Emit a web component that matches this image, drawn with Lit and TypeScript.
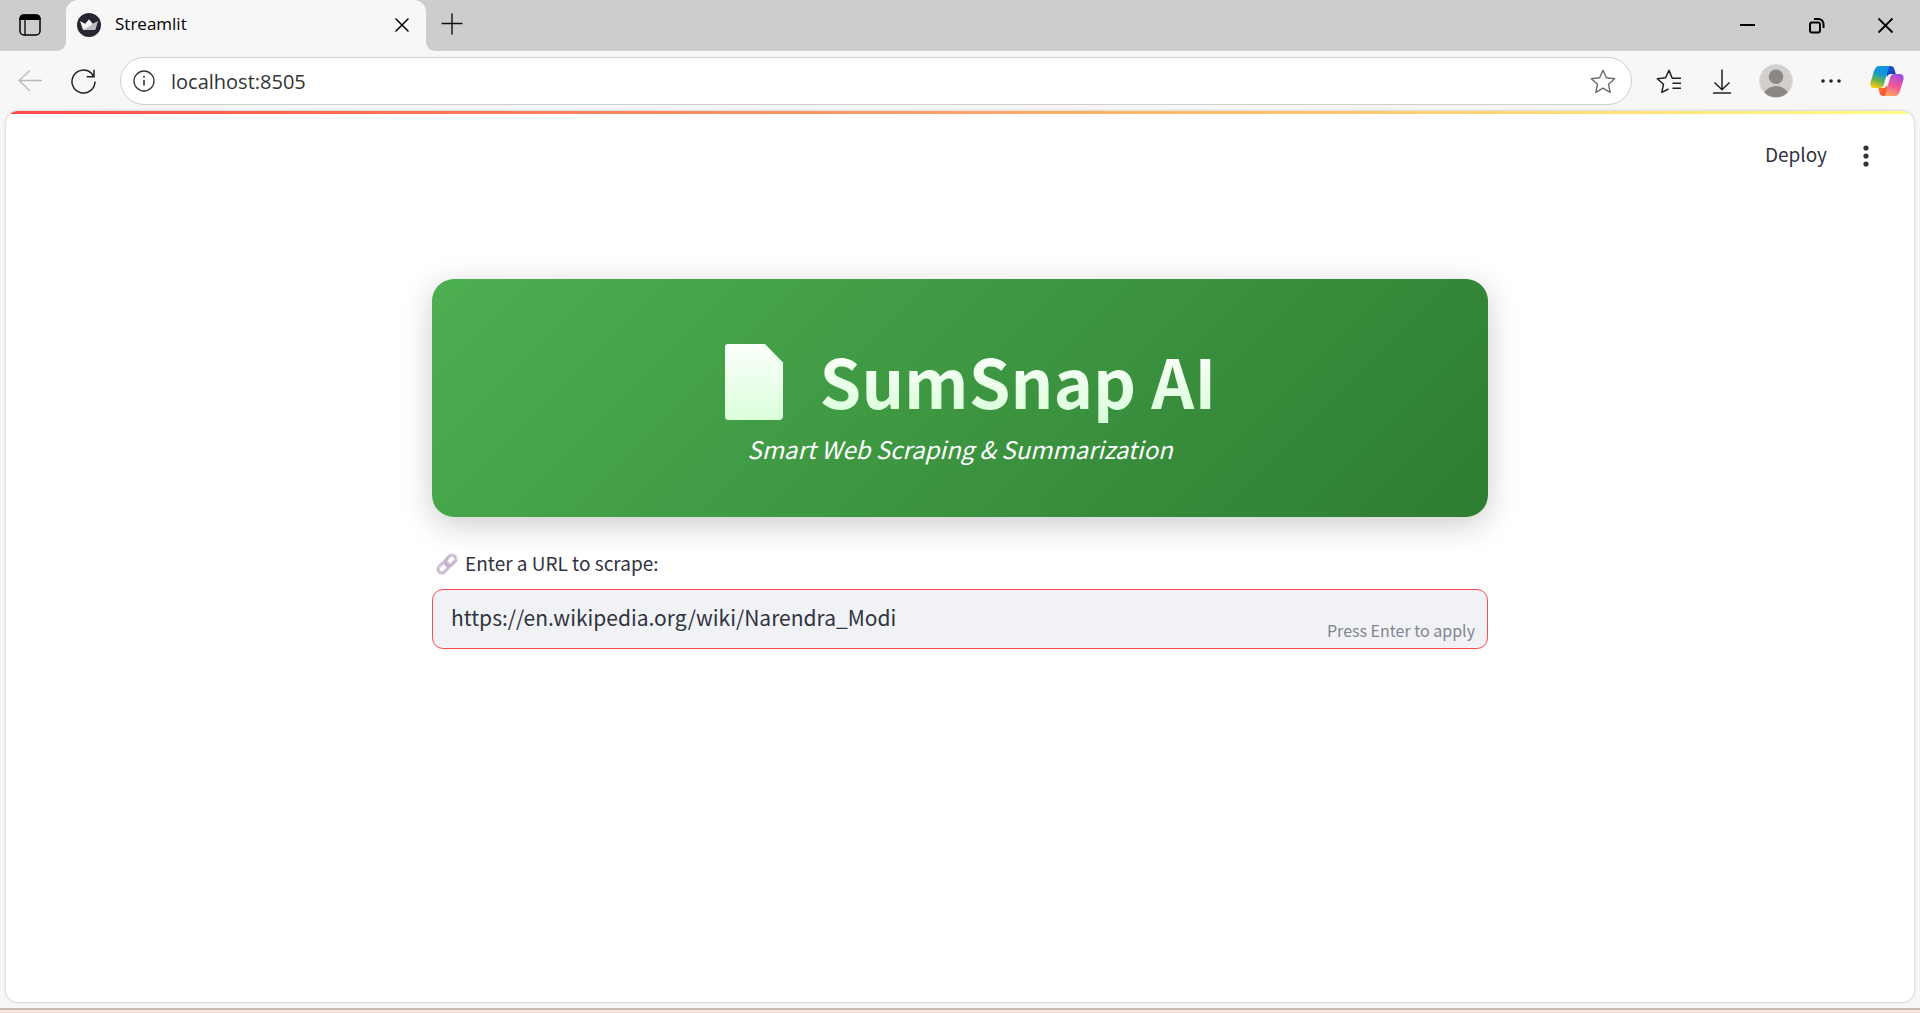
import { LitElement, html, css } from "lit";
import { customElement, state } from "lit/decorators.js";

const reset = css`
  *, *::before, *::after { box-sizing: border-box; }
  button { background: none; border: 0; padding: 0; margin: 0; font: inherit; color: inherit; cursor: pointer; }
  svg { display: block; flex: none; }
`;

@customElement("tab-strip")
export class TabStrip extends LitElement {
  static styles = [reset, css`
    :host { display: block; }
    .strip { display: flex; height: 51px; background: linear-gradient(#cdcdcd 50%, #f7f7f7 50%); color: #000; }
    .lead { width: 66px; padding: 0 0 2px 19px; display: flex; align-items: center; background: #cdcdcd; border-bottom-right-radius: 9px; }
    .tab { width: 360px; display: flex; align-items: center; background: #f7f7f7; border-radius: 12px 12px 0 0; padding: 0 17px 2px 11px; gap: 14px; font-size: 17px; }
    .title { flex: 1; padding-bottom: 2px; }
    .rest { flex: 1; display: flex; align-items: center; background: #cdcdcd; border-bottom-left-radius: 9px; padding: 0 26px 0 15px; }
    .add { padding-bottom: 4px; }
    .window { margin-left: auto; display: flex; gap: 52px; }
  `];
  render() {
    return html`
      <div class="strip">
        <div class="lead">
          <button aria-label="Tab actions">
            <svg width="22" height="22" viewBox="0 0 22 22"><rect x="1" y="1" width="20" height="20" rx="4" fill="none" stroke="#000" stroke-width="1.5"/><path d="M0.5 6V4.5a4 4 0 0 1 4-4h13a4 4 0 0 1 4 4V6z"/><path d="M6 6v15" stroke="#000" stroke-width="1.3"/></svg>
          </button>
        </div>
        <div class="tab">
          <svg width="24" height="24" viewBox="0 0 24 24"><circle cx="12" cy="12" r="12" fill="#262730"/><path d="M3.200 8.200 8.200 11 12 6.500l3.800 4.500 5-2.800-2.300 7.600q-.4 1.200-1.500 1.200H7q-1.100 0-1.500-1.200z" fill="#dadadc"/><path d="M12 6.500l3.800 4.500L7 16.500 3.200 8.200l5 2.800z" fill="#f4f4f4"/><path d="m20.800 8.200-5 2.800L7 17h10q1.100 0 1.500-1.200z" fill="#bdbdc0"/></svg>
          <span class="title">Streamlit</span>
          <button aria-label="Close tab">
            <svg width="14" height="14" viewBox="0 0 14 14"><path d="M1 1l12 12M13 1 1 13" stroke="#000" stroke-width="1.5" stroke-linecap="round"/></svg>
          </button>
        </div>
        <div class="rest">
          <button class="add" aria-label="New tab">
            <svg width="22" height="22" viewBox="0 0 22 22"><path d="M11 .5v21M.5 10.500h21" stroke="#111" stroke-width="1.400"/></svg>
          </button>
          <div class="window">
            <button aria-label="Minimize"><svg width="17" height="17" viewBox="0 0 17 17"><path d="M1 8h15" stroke="#000" stroke-width="2"/></svg></button>
            <button aria-label="Restore"><svg width="17" height="17" viewBox="0 0 17 17" fill="none" stroke="#000" stroke-width="2"><rect x="2" y="5.500" width="10" height="10" rx="2"/><path d="M6 2h4.500a5 5 0 0 1 5 5v4"/></svg></button>
            <button aria-label="Close window"><svg width="17" height="17" viewBox="0 0 17 17"><path d="M1.500 1.500l14 14M15.500 1.500l-14 14" stroke="#000" stroke-width="1.800"/></svg></button>
          </div>
        </div>
      </div>`;
  }
}

@customElement("tool-bar")
export class ToolBar extends LitElement {
  static styles = [reset, css`
    :host { display: block; }
    .bar { display: flex; align-items: center; height: 60px; padding: 0 16px; background: #f7f7f7; }
    .nav { display: flex; align-items: center; gap: 29px; padding-left: 2px; width: 104px; }
    .address { flex: 1; display: flex; align-items: center; gap: 16px; height: 48px; padding: 0 15px 0 12px; border: 1px solid #cfcfcf; border-radius: 24px; background: #fff; }
    .url { flex: 1; min-width: 0; border: 0; outline: 0; padding: 0; background: none; font: inherit; font-size: 20px; color: #333; }
    .tools { display: flex; align-items: center; padding-left: 24px; }
    .fav { width: 57px; }
    .down { width: 46px; }
    .user { width: 62px; }
    .more { width: 49px; }
  `];
  @state() private url = "localhost:8505";
  render() {
    return html`
      <div class="bar">
        <div class="nav">
          <button aria-label="Back"><svg width="24" height="22" viewBox="0 0 24 22" fill="none" stroke="#b9b9b9" stroke-width="1.300"><path d="M24 10.500H1M12 .5 1 10.500l11 10.500"/></svg></button>
          <button aria-label="Refresh"><svg width="25" height="25" viewBox="0 0 25 25" fill="none" stroke="#222" stroke-width="1.500"><path d="M24 12.500A11.500 11.500 0 1 1 20.500 4.300L22.500 7.500M23 .7v7h-7.300"/></svg></button>
        </div>
        <div class="address">
          <svg width="22" height="22" viewBox="0 0 22 22" fill="none" stroke="#333" stroke-width="1.300"><circle cx="11" cy="11" r="10"/><path d="M11 10v5.500" stroke-width="1.600"/><circle cx="11" cy="6.700" r="1" fill="#333" stroke="none"/></svg>
          <input class="url" aria-label="Address" .value=${this.url} />
          <button aria-label="Add to favorites"><svg width="26" height="25" viewBox="0 0 26 25" fill="none" stroke="#6a6a6a" stroke-width="1.400" stroke-linejoin="round"><path d="M13 1.300l3.400 7.500 8.300.9-6.200 5.500 1.700 8.100-7.200-4.100-7.200 4.100 1.700-8.100L1.300 9.700l8.300-.9z"/></svg></button>
        </div>
        <div class="tools">
          <button class="fav" aria-label="Favorites"><svg width="26" height="25" viewBox="0 0 26 25" fill="none" stroke="#222" stroke-width="1.500" stroke-linejoin="round"><path d="M25 9.200H16.200L13 1.300 9.600 8.800l-8.300.9 6.200 5.500-1.700 8.100L12.500 20M16.500 14.200H25M16.500 19.200H25"/></svg></button>
          <button class="down" aria-label="Downloads"><svg width="18" height="25" viewBox="0 0 18 25" fill="none" stroke="#222" stroke-width="1.500"><path d="M9 .5v20M1.500 13.500 9 20.700l7.500-7.200M0 24h18"/></svg></button>
          <button class="user" aria-label="Profile"><svg width="34" height="34" viewBox="0 0 34 34"><circle cx="17" cy="17" r="16.500" fill="#d2d0ce" stroke="#dededc"/><circle cx="17" cy="12.700" r="7.200" fill="#8b8784"/><path d="M5.300 28.500C7.500 24.300 12 22.200 17 22.200s9.500 2.100 11.700 6.300A16.400 16.400 0 0 1 17 33.300a16.400 16.400 0 0 1-11.700-4.800z" fill="#8b8784"/></svg></button>
          <button class="more" aria-label="Settings and more"><svg width="20" height="6" viewBox="0 0 20 6" fill="#222"><circle cx="2" cy="3" r="1.800"/><circle cx="10" cy="3" r="1.800"/><circle cx="18" cy="3" r="1.800"/></svg></button>
          <button aria-label="Copilot">
            <svg width="34" height="32" viewBox="0 0 34 32">
              <defs>
                <linearGradient id="cool" x1=".6" y1="0" x2=".3" y2="1"><stop offset="0" stop-color="#0f8fe6"/><stop offset=".35" stop-color="#139ad0"/><stop offset=".65" stop-color="#5fb356"/><stop offset="1" stop-color="#fbc90a"/></linearGradient>
                <linearGradient id="deep" x1="0" y1="0" x2="1" y2="1"><stop offset="0" stop-color="#1a5fd8"/><stop offset="1" stop-color="#1238b4"/></linearGradient>
                <linearGradient id="warm" x1=".7" y1="0" x2=".3" y2="1"><stop offset="0" stop-color="#a04de8"/><stop offset=".5" stop-color="#f0559b"/><stop offset="1" stop-color="#ffa35a"/></linearGradient>
                <linearGradient id="ember" x1="0" y1="0" x2="1" y2="1"><stop offset="0" stop-color="#f78a1e"/><stop offset="1" stop-color="#ee3b4b"/></linearGradient>
              </defs>
              <path d="M14 1h6.500c2.500 0 3.500 1.500 4 3.500L25.800 9H21c-2.500 0-3.500 1.500-4 3z" fill="url(#deep)"/>
              <path d="M20 31h-6.500c-2.500 0-3.500-1.500-4-3.500L8.200 23H13c2.500 0 3.500-1.500 4-3z" fill="url(#ember)"/>
              <path d="M20.500 1H9.500C6.500 1 5 3 4 6L.8 16.500C-.4 20.500 1 23 4.500 23h5.300c2.200 0 3.300-1.200 4-3.500L18 5c.5-2 1-3.500 2.500-4z" fill="url(#cool)"/>
              <path d="M13.500 31h11c3 0 4.500-2 5.500-5l3.200-10.500c1.200-4-.2-6.500-3.700-6.500h-5.300c-2.200 0-3.300 1.200-4 3.500L16 27c-.5 2-1 3.500-2.500 4z" fill="url(#warm)"/>
            </svg>
          </button>
        </div>
      </div>`;
  }
}

@customElement("summary-page")
export class SummaryPage extends LitElement {
  static styles = [reset, css`
    :host { display: flex; font-family: "Noto Sans CJK JP", "Noto Sans", sans-serif; color: #31333f; }
    .page { flex: 1; background: #fff; border-radius: 12px; overflow: hidden; box-shadow: 0 0 3px rgba(0, 0, 0, 0.25); }
    .stripe { height: 3px; background: linear-gradient(90deg, #ff4b4b, #fffd80); }
    .header { display: flex; justify-content: flex-end; align-items: center; gap: 35px; height: 84px; padding-right: 44px; font-size: 19px; line-height: 28px; }
    .deploy { padding-bottom: 4px; }
    .main { width: 100%; max-width: 1056px; margin: 0 auto; padding: 81px 0 40px; }
    .banner { display: flex; flex-direction: column; align-items: center; height: 238px; padding-top: 54px; border-radius: 22px; color: #fff; background: linear-gradient(135deg, #4caf50, #2e7d32); box-shadow: 0 8px 32px rgba(0, 0, 0, 0.2); }
    .name { display: flex; align-items: center; gap: 36px; height: 98px; margin: 0; padding-left: 20px; font-size: 67px; line-height: 92px; font-weight: 700; }
    .word { padding-bottom: 4px; background: linear-gradient(#fff 10%, #d8ffd8 90%); -webkit-background-clip: text; background-clip: text; color: transparent; }
    .tagline { margin: 0; font-size: 24px; line-height: 36px; font-style: italic; }
    .label { display: flex; align-items: center; gap: 7px; margin: 32px 0 10px; padding-left: 4px; font-size: 19px; line-height: 28px; height: 30px; }
    .caption { padding-bottom: 2px; }
    .field { display: flex; height: 60px; padding: 0 12px 0 18px; border: 1px solid #ff4b4b; border-radius: 11px; background: #f0f2f6; }
    .input { flex: 1; min-width: 0; border: 0; outline: 0; padding: 0 0 4px; background: none; font: inherit; font-size: 21px; color: inherit; }
    .hint { align-self: flex-end; padding-bottom: 6px; font-size: 16px; line-height: 24px; color: #83858e; }
  `];
  @state() private target = "https://en.wikipedia.org/wiki/Narendra_Modi";
  render() {
    return html`
      <div class="page">
        <div class="stripe"></div>
        <header class="header">
          <button class="deploy">Deploy</button>
          <button aria-label="Main menu"><svg width="8" height="22" viewBox="0 0 8 22" fill="#31333f"><circle cx="4" cy="3" r="2.600"/><circle cx="4" cy="11" r="2.600"/><circle cx="4" cy="19" r="2.600"/></svg></button>
        </header>
        <main class="main">
          <section class="banner">
            <h1 class="name">
              <svg width="60" height="76" viewBox="0 0 60 76" aria-hidden="true"><defs><linearGradient id="sheet" x1="0" y1="0" x2="0" y2="1"><stop offset="0" stop-color="#fbfffb"/><stop offset="1" stop-color="#dbffdb"/></linearGradient></defs><path d="M4 0h37L59 18.500V72q0 4-4 4H4q-3 0-3-4V3q0-3 3-3z" fill="url(#sheet)"/></svg>
              <span class="word">SumSnap AI</span>
            </h1>
            <p class="tagline">Smart Web Scraping &amp; Summarization</p>
          </section>
          <label class="label" for="target">
            <svg width="22" height="22" viewBox="0 0 22 22" fill="none" aria-hidden="true"><g stroke-width="3.200"><rect x="-6.200" y="-3.800" width="12.400" height="7.600" rx="3.800" transform="translate(7.500 14.500) rotate(-45)" stroke="#cdbfd4"/><rect x="-6.200" y="-3.800" width="12.400" height="7.600" rx="3.800" transform="translate(14.500 7.500) rotate(-45)" stroke="#c4b4cd"/></g><path d="M12.500 4.500l2-2a3.500 3.500 0 0 1 5 5M2.500 14.500l2-2" stroke="#e2d9e7"/></svg>
            <span class="caption">Enter a URL to scrape:</span>
          </label>
          <div class="field">
            <input class="input" id="target" type="text" .value=${this.target} />
            <span class="hint">Press Enter to apply</span>
          </div>
        </main>
      </div>`;
  }
}

@customElement("app-root")
export class AppRoot extends LitElement {
  static styles = css`
    :host { display: block; font-family: "Open Sans", "Noto Sans", sans-serif; }
    .window { display: flex; flex-direction: column; min-height: 100vh; background: #f7f7f7; }
    .page { flex: 1; margin: 0 6px 6px; }
    .edge { height: 5px; background: #fbe3dc; border-top: 2px solid #c9b9b3; box-sizing: border-box; }
  `;
  render() {
    return html`
      <div class="window">
        <tab-strip></tab-strip>
        <tool-bar></tool-bar>
        <summary-page class="page"></summary-page>
        <div class="edge"></div>
      </div>`;
  }
}
